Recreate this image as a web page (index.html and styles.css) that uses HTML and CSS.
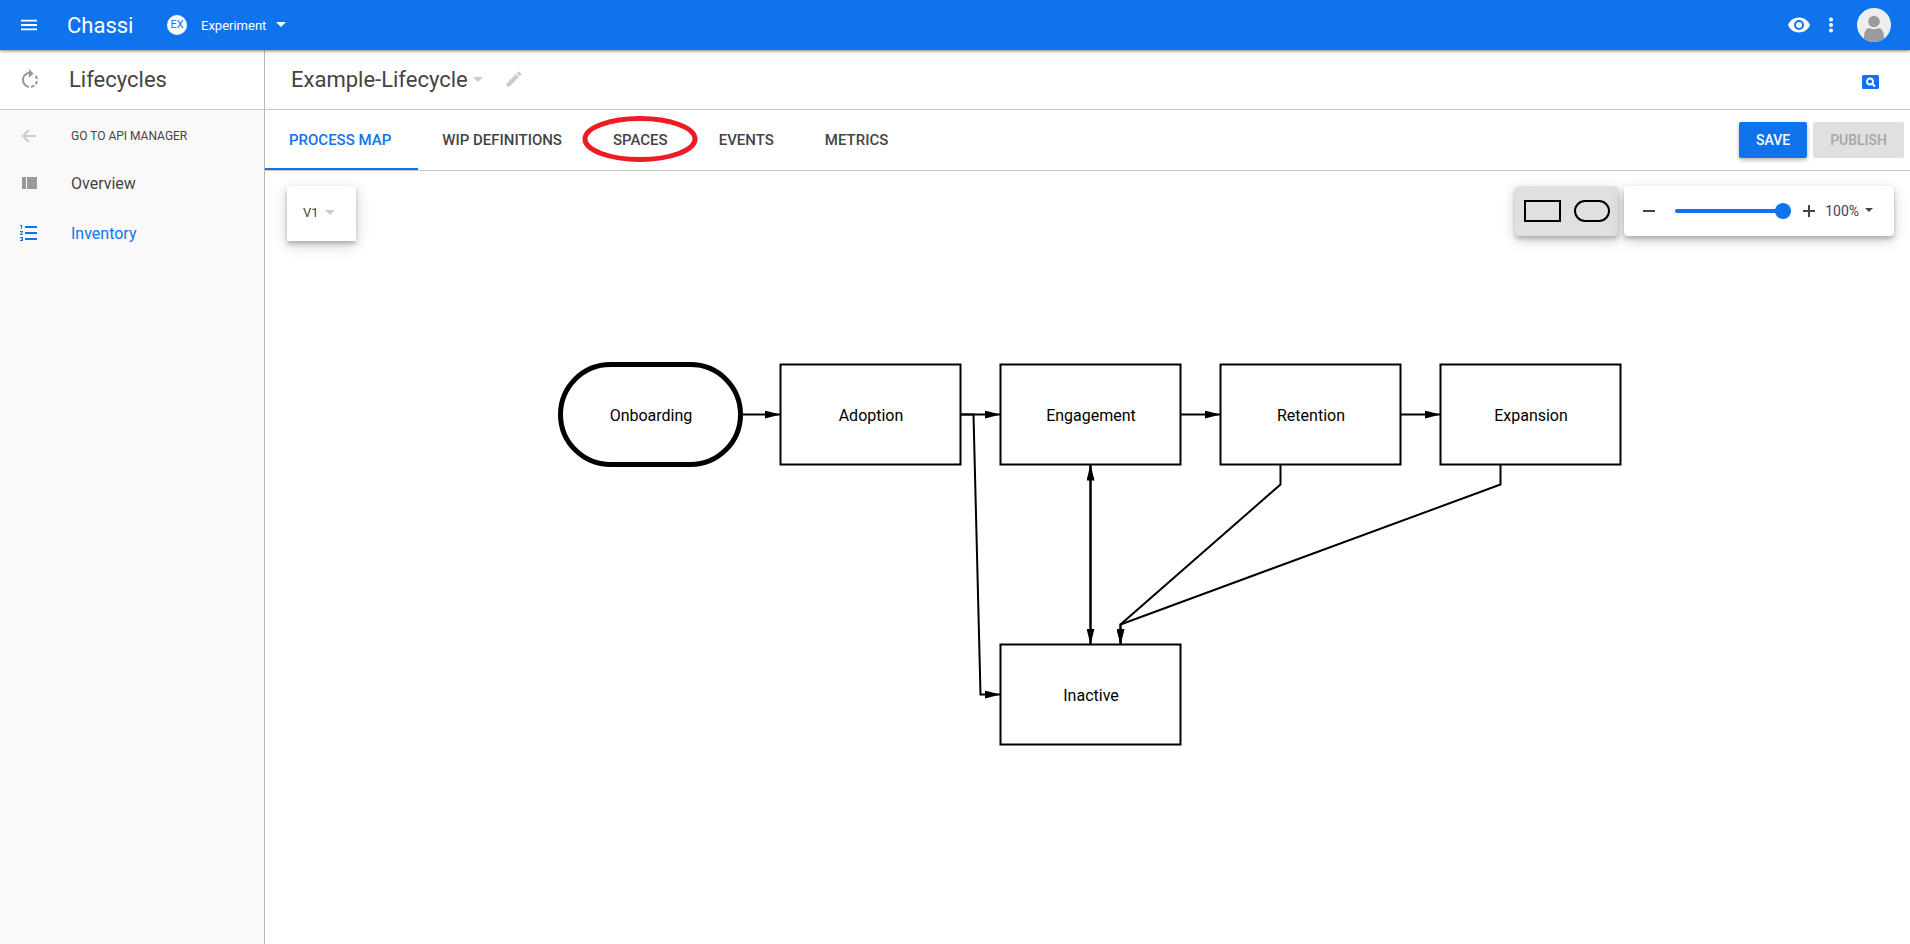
FILE: index.html
```html
<!DOCTYPE html>
<html lang="en">
<head>
<meta charset="utf-8">
<title>Chassi - Example-Lifecycle</title>
<link rel="stylesheet" href="styles.css">
</head>
<body>
<div class="app">
  <header class="topbar">
    <button class="icon-btn menu-btn" type="button" aria-label="Menu">
      <svg width="24" height="24" viewBox="0 0 24 24"><path d="M4 7.600h16M4 12h16M4 16.400h16" stroke="currentColor" stroke-width="1.800"/></svg>
    </button>
    <a class="brand" href="#">Chassi</a>
    <button class="workspace" type="button">
      <span class="badge">EX</span>
      <span>Experiment</span>
      <svg class="workspace-caret" width="10" height="5" viewBox="0 0 10 5"><path d="M0 0h10L5 5z" fill="currentColor"/></svg>
    </button>
    <div class="topbar-actions">
      <button class="icon-btn" type="button" aria-label="Preview">
        <svg width="24" height="24" viewBox="0 0 24 24"><path fill="currentColor" d="M12 4.500C7 4.500 2.730 7.610 1 12c1.730 4.390 6 7.500 11 7.500s9.270-3.110 11-7.500c-1.730-4.390-6-7.500-11-7.500zM12 17a5 5 0 1 1 0-10 5 5 0 0 1 0 10zm0-8a3 3 0 1 0 0 6 3 3 0 0 0 0-6z"/></svg>
      </button>
      <button class="icon-btn more-btn" type="button" aria-label="More">
        <svg width="6" height="16" viewBox="0 0 6 16"><g fill="currentColor"><circle cx="3" cy="2.500" r="2"/><circle cx="3" cy="8" r="2"/><circle cx="3" cy="13.500" r="2"/></g></svg>
      </button>
      <button class="icon-btn" type="button" aria-label="Account">
        <svg width="34" height="34" viewBox="0 0 34 34"><circle cx="17" cy="17" r="17" fill="#eee"/><circle cx="17" cy="13.500" r="5.800" fill="#9b9b9b"/><path d="M7 30.700c0-7 2-10.700 5.500-10.700 2.800 1.600 6.200 1.600 9 0 3.500 0 5.500 3.700 5.500 10.700a17 17 0 0 1-20 0z" fill="#9b9b9b"/></svg>
      </button>
    </div>
  </header>

  <div class="body">
    <aside class="sidebar">
      <div class="sidebar-head">
        <svg class="side-icon" width="24" height="24" viewBox="0 0 24 24"><path fill="#999" d="M15.550 5.550 11 1v3.070C7.060 4.560 4 7.920 4 12s3.050 7.440 7 7.930v-2.020c-2.840-.48-5-2.940-5-5.910s2.160-5.430 5-5.910V10l4.550-4.450zM19.930 11c-.17-1.390-.72-2.730-1.620-3.890l-1.420 1.420c.54.750.88 1.600 1.020 2.470h2.020zM13 17.900v2.020c1.390-.17 2.740-.71 3.900-1.610l-1.440-1.440c-.75.540-1.590.89-2.460 1.030zm3.890-2.420 1.420 1.410c.9-1.160 1.450-2.500 1.620-3.890h-2.020c-.14.870-.48 1.720-1.020 2.480z"/></svg>
        <h2 class="title">Lifecycles</h2>
      </div>
      <nav class="side-nav">
        <a class="side-link side-back" href="#">
          <svg class="side-icon" width="24" height="24" viewBox="0 0 24 24"><path d="M19 12H6M12 6l-6 6 6 6" fill="none" stroke="#ccc" stroke-width="2"/></svg>
          <span>GO TO API MANAGER</span>
        </a>
        <a class="side-link" href="#">
          <svg class="side-icon" width="24" height="24" viewBox="0 0 24 24"><path fill="#999" d="M5 6h4v12H5zM10 6h10v12H10z"/></svg>
          <span>Overview</span>
        </a>
        <a class="side-link active" href="#" aria-current="page">
          <svg class="side-icon" width="24" height="24" viewBox="0 0 24 24"><path fill="currentColor" d="M3 17h2v.5H4v1h1v.5H3v1h3v-4H3v1zm1-9h1V4H3v1h1v3zm-1 3h1.800L3 13.100v.9h3v-1H4.200L6 10.900V10H3v1zm5-6v2h12V5H8zm0 14h12v-2H8v2zm0-6h12v-2H8v2z"/></svg>
          <span>Inventory</span>
        </a>
      </nav>
    </aside>

    <main class="main">
      <div class="page-head">
        <h1 class="title">Example-Lifecycle</h1>
        <button class="icon-btn pale head-caret" type="button" aria-label="Choose lifecycle">
          <svg width="10" height="5" viewBox="0 0 10 5"><path d="M0 0h10L5 5z" fill="currentColor"/></svg>
        </button>
        <button class="icon-btn pale rename-btn" type="button" aria-label="Rename">
          <svg width="20" height="20" viewBox="0 0 24 24"><path fill="currentColor" d="M3 17.250V21h3.750L17.810 9.940l-3.750-3.750L3 17.250zM20.710 7.040a1 1 0 0 0 0-1.410l-2.340-2.340a1 1 0 0 0-1.410 0l-1.830 1.830 3.750 3.750 1.830-1.830z"/></svg>
        </button>
        <button class="icon-btn search-btn" type="button" aria-label="Search">
          <svg width="17" height="14" viewBox="0 0 17 14"><rect width="17" height="14" rx="1.500" fill="#0f73ee"/><circle cx="8" cy="6.500" r="3" fill="none" stroke="#fff" stroke-width="1.800"/><path d="m10 8.500 3 3" stroke="#fff" stroke-width="2"/></svg>
        </button>
      </div>

      <div class="tabbar">
        <div class="tabs" role="tablist">
          <button class="tab selected" role="tab" aria-selected="true" type="button">PROCESS MAP</button>
          <button class="tab" role="tab" type="button">WIP DEFINITIONS</button>
          <button class="tab marked" role="tab" type="button">SPACES
            <svg class="mark" width="116" height="46" viewBox="0 0 116 46"><ellipse cx="58" cy="23" rx="55" ry="20.500" fill="none" stroke="#ed1c24" stroke-width="5"/></svg>
          </button>
          <button class="tab" role="tab" type="button">EVENTS</button>
          <button class="tab" role="tab" type="button">METRICS</button>
        </div>
        <button class="btn primary" type="button">SAVE</button>
        <button class="btn" type="button" disabled>PUBLISH</button>
      </div>

      <section class="canvas">
        <svg class="diagram" width="1380" height="600" role="img" aria-label="Process map">
          <defs>
            <marker id="arrow" viewBox="0 0 16 8" refX="16" refY="4" markerWidth="16" markerHeight="8" markerUnits="userSpaceOnUse" orient="auto-start-reverse"><path d="M0 0 16 4 0 8z"/></marker>
          </defs>
          <g transform="translate(.5 .5)" fill="none" stroke="#000" stroke-width="2">
            <rect x="295" y="193" width="180" height="100" rx="50" stroke-width="5"/>
            <rect x="515" y="193" width="180" height="100"/>
            <rect x="735" y="193" width="180" height="100"/>
            <rect x="955" y="193" width="180" height="100"/>
            <rect x="1175" y="193" width="180" height="100"/>
            <rect x="735" y="473" width="180" height="100"/>
            <g marker-end="url(#arrow)">
              <path d="M475 243h40"/>
              <path d="M695 243h40"/>
              <path d="M915 243h40"/>
              <path d="M1135 243h40"/>
              <path d="M695 243h13l7 280h20"/>
              <path d="M1015 293v20L855 453v20"/>
              <path d="M1235 293v20L855 453v20"/>
              <path d="M825 293v180" stroke-width="2.500" marker-start="url(#arrow)"/>
            </g>
          </g>
          <g class="node-labels">
            <text x="386" y="250">Onboarding</text>
            <text x="606" y="250">Adoption</text>
            <text x="826" y="250">Engagement</text>
            <text x="1046" y="250">Retention</text>
            <text x="1266" y="250">Expansion</text>
            <text x="826" y="530">Inactive</text>
          </g>
        </svg>

        <div class="canvas-tools">
          <button class="card version" type="button">V1
            <svg class="pale" width="10" height="5" viewBox="0 0 10 5"><path d="M0 0h10L5 5z" fill="currentColor"/></svg>
          </button>
          <div class="card shapes">
            <button class="icon-btn" type="button" aria-label="Rectangle">
              <svg width="38" height="24" viewBox="0 0 38 24"><rect x="2" y="2" width="35" height="20" fill="none" stroke="#000" stroke-width="2"/></svg>
            </button>
            <button class="icon-btn" type="button" aria-label="Rounded rectangle">
              <svg width="38" height="24" viewBox="0 0 38 24"><rect x="2" y="2" width="34" height="20" rx="10" fill="none" stroke="#000" stroke-width="2"/></svg>
            </button>
          </div>
          <div class="card zoom">
            <button class="icon-btn" type="button" aria-label="Zoom out">
              <svg width="14" height="14" viewBox="0 0 14 14"><path d="M1 7h12" stroke="#444" stroke-width="2"/></svg>
            </button>
            <input class="slider" type="range" min="0" max="100" value="100" aria-label="Zoom">
            <button class="icon-btn" type="button" aria-label="Zoom in">
              <svg width="14" height="14" viewBox="0 0 14 14"><path d="M1 7h12M7 1v12" stroke="#444" stroke-width="2"/></svg>
            </button>
            <button class="zoom-level" type="button">100%
              <svg class="zoom-caret" width="8" height="4" viewBox="0 0 8 4"><path d="M0 0h8L4 4z" fill="currentColor"/></svg>
            </button>
          </div>
        </div>
      </section>
    </main>
  </div>
</div>
</body>
</html>
```
FILE: styles.css
```css
* {
  box-sizing: border-box;
}

body {
  margin: 0;
  background: #fff;
  color: #444;
  font-family: Roboto, "Liberation Sans", sans-serif;
  font-size: 16px;
}

button {
  margin: 0;
  padding: 0;
  border: 0;
  background: none;
  color: inherit;
  font: inherit;
  cursor: pointer;
}

a {
  color: inherit;
  text-decoration: none;
}

svg {
  display: block;
  flex: none;
}

.app {
  display: flex;
  flex-direction: column;
  min-height: 100vh;
}

.icon-btn {
  display: flex;
  align-items: center;
  justify-content: center;
}

.pale {
  color: #ccc;
}

.title {
  margin: 0;
  font-size: 22px;
  font-weight: 400;
  line-height: 28px;
}

/* Top bar */

.topbar {
  position: relative;
  z-index: 1;
  display: flex;
  align-items: center;
  height: 50px;
  padding: 0 19px 0 17px;
  background: #0f73ee;
  color: #fff;
  box-shadow: 0 1px 3px rgba(0, 0, 0, 0.5);
}

.brand {
  width: 100px;
  margin-left: 26px;
  font-size: 22px;
}

.workspace {
  display: flex;
  align-items: center;
  font-size: 13px;
}

.badge {
  width: 20px;
  margin-right: 14px;
  border-radius: 50%;
  background: #fff;
  color: #0f73ee;
  font-size: 11px;
  line-height: 20px;
  text-align: center;
}

.workspace-caret {
  margin: 0 0 2px 10px;
}

.topbar-actions {
  display: flex;
  align-items: center;
  margin-left: auto;
}

.more-btn {
  margin: 0 23px 0 17px;
}

/* Sidebar */

.body {
  display: flex;
  flex: 1;
}

.sidebar {
  flex: none;
  width: 265px;
  border-right: 1px solid #b9b9b9;
  background: #f9f9f9;
}

.sidebar-head,
.page-head {
  display: flex;
  align-items: center;
  height: 60px;
  border-bottom: 1px solid #c8c8c8;
  background: #fff;
}

.sidebar-head {
  padding-left: 18px;
}

.sidebar-head .title {
  margin-left: 27px;
}

.side-nav {
  padding-top: 4px;
}

.side-link {
  display: flex;
  align-items: center;
  gap: 30px;
  height: 50px;
  padding-left: 17px;
}

.side-back {
  height: 44px;
  font-size: 12px;
}

.active {
  color: #0f73ee;
}

/* Page head and tabs */

.main {
  display: flex;
  flex: 1;
  flex-direction: column;
  min-width: 0;
}

.page-head {
  padding: 0 31px 0 26px;
}

.head-caret {
  margin: 0 21px 0 5px;
}

.rename-btn {
  padding-bottom: 2px;
}

.search-btn {
  margin-left: auto;
  padding-top: 4px;
}

.tabbar {
  display: flex;
  align-items: center;
  gap: 6px;
  height: 61px;
  padding-right: 6px;
  border-bottom: 1px solid #c8c8c8;
}

.tabs {
  display: flex;
  align-self: stretch;
  margin-right: auto;
}

.tab {
  padding: 0 27px 0 24px;
  border-top: 2px solid transparent;
  border-bottom: 2px solid transparent;
  font-size: 15px;
  font-weight: 500;
}

.selected {
  border-bottom-color: #0f73ee;
  color: #0f73ee;
}

.marked {
  position: relative;
}

.mark {
  position: absolute;
  top: 4px;
  left: -7px;
}

.btn {
  height: 36px;
  padding: 0 17px;
  border-radius: 2px;
  background: #e0e0e0;
  color: #a6a6a6;
  font-size: 14px;
  font-weight: 500;
}

.primary {
  background: #0f73ee;
  color: #fff;
  box-shadow: 0 2px 4px rgba(0, 0, 0, 0.3);
}

/* Canvas */

.canvas {
  position: relative;
  flex: 1;
  min-height: 600px;
  overflow: hidden;
}

.diagram {
  position: absolute;
  top: 0;
  left: 0;
}

.node-labels {
  fill: #000;
  font-size: 16px;
  text-anchor: middle;
}

.canvas-tools {
  position: relative;
  display: flex;
  align-items: flex-start;
  gap: 6px;
  padding: 15px 16px 15px 22px;
}

.card {
  display: flex;
  align-items: center;
  height: 50px;
  border-radius: 4px;
  background: #fff;
  box-shadow: 0 4px 14px rgba(0, 0, 0, 0.2), 0 3px 4px rgba(0, 0, 0, 0.2);
}

.version {
  gap: 6px;
  height: 55px;
  margin-right: auto;
  padding: 0 21px 2px 16px;
  border-radius: 0;
  font-size: 13px;
}

.shapes {
  gap: 12px;
  padding: 0 7px 0 8px;
  background: #e0e0e0;
}

.zoom {
  padding: 0 21px 0 18px;
}

.slider {
  width: 116px;
  height: 16px;
  margin: 0 11px 0 19px;
  background: none;
  appearance: none;
  cursor: pointer;
}

.slider::-webkit-slider-runnable-track {
  height: 4px;
  border-radius: 2px;
  background: #0f73ee;
}

.slider::-webkit-slider-thumb {
  width: 16px;
  height: 16px;
  margin-top: -6px;
  border-radius: 50%;
  background: #0f73ee;
  appearance: none;
}

.zoom-level {
  display: flex;
  align-items: center;
  gap: 6px;
  margin-left: 9px;
  font-size: 14px;
}

.zoom-caret {
  margin-bottom: 2px;
}
```
